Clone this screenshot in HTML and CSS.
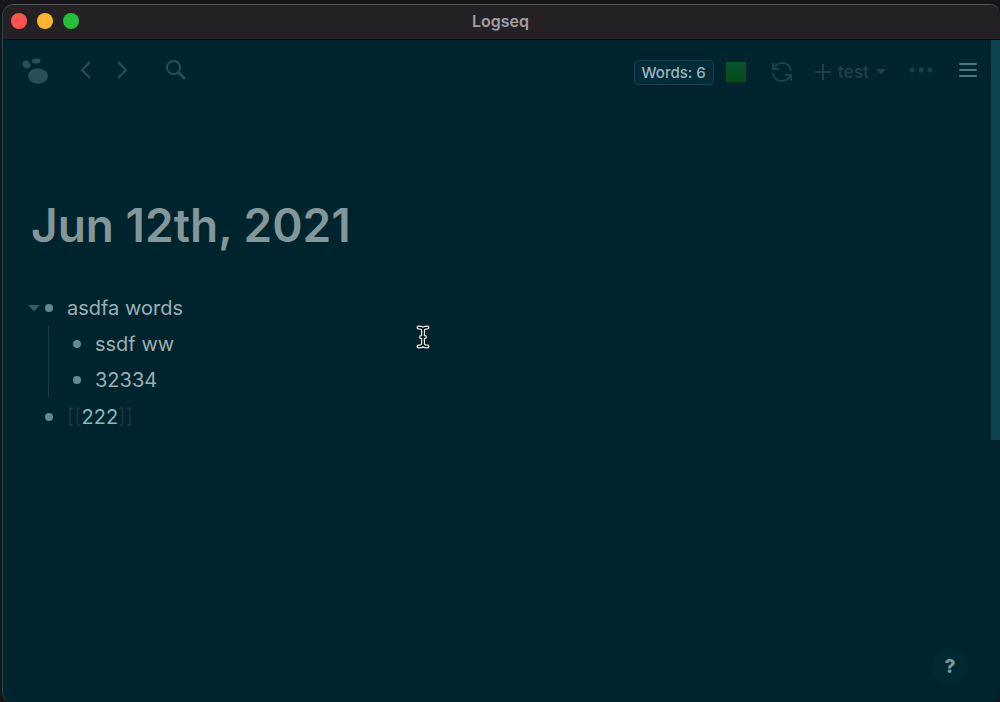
FILE: index.html
```html
<!DOCTYPE html>
<html lang="en">
<head>
<meta charset="utf-8">
<title>Logseq</title>
<meta name="viewport" content="width=device-width, initial-scale=1">
<link rel="stylesheet" href="styles.css">
</head>
<body>
<div class="window">
  <header class="titlebar">
    <div class="lights">
      <button class="light light-close" aria-label="Close"></button>
      <button class="light light-minimize" aria-label="Minimize"></button>
      <button class="light light-zoom" aria-label="Zoom"></button>
    </div>
    <div class="titlebar-text">Logseq</div>
  </header>
  <div class="app">
    <div class="main">
      <nav class="toolbar">
        <a class="logo" href="#" aria-label="Home">
          <svg width="26" height="26" viewBox="0 0 26 26" fill="currentColor"><ellipse cx="4.500" cy="6.500" rx="3.600" ry="4.300" transform="rotate(-35 4.500 6.500)"/><ellipse cx="14.200" cy="3" rx="4.300" ry="2.500" transform="rotate(-5 14.200 3)"/><ellipse cx="16" cy="18" rx="10" ry="7.800" transform="rotate(5 16 18)"/></svg>
        </a>
        <div class="history">
          <button class="icon-button" aria-label="Back"><svg width="12" height="18" viewBox="0 0 12 18" class="stroke"><path d="M10 1 2 9l8 8"/></svg></button>
          <button class="icon-button" aria-label="Forward"><svg width="12" height="18" viewBox="0 0 12 18" class="stroke"><path d="m2 1 8 8-8 8"/></svg></button>
        </div>
        <button class="icon-button search" aria-label="Search"><svg width="22" height="22" viewBox="0 0 22 22" class="stroke"><circle cx="8.500" cy="8.500" r="6.500"/><path d="m13 13 7 7" stroke-width="2.600"/></svg></button>
        <div class="actions">
          <button class="word-count">Words: 6</button>
          <button class="status" aria-label="Sync status"></button>
          <button class="icon-button refresh" aria-label="Refresh"><svg width="20" height="20" viewBox="0 0 20 20" class="stroke"><path d="M1 1v6h6M1.500 6.500C3.500 2.500 7 1 10.500 1c4.500 0 8.500 3.500 8.500 8M19 19v-6h-6M18.500 13.500c-2 4-5.500 5.500-9 5.500C5 19 1 15.500 1 11"/></svg></button>
          <button class="icon-button graph"><svg width="16" height="16" viewBox="0 0 16 16" class="stroke"><path d="M8 0v16M0 8h16"/></svg><span>test</span><svg class="caret" width="10" height="6" viewBox="0 0 10 6"><path d="M0 0h10L5 5.500z" fill="currentColor"/></svg></button>
          <button class="icon-button more" aria-label="More"><svg width="24" height="6" viewBox="0 0 24 6" fill="currentColor"><circle cx="3" cy="3" r="2.500"/><circle cx="12" cy="3" r="2.500"/><circle cx="21" cy="3" r="2.500"/></svg></button>
          <button class="icon-button menu" aria-label="Menu"><svg width="18" height="16" viewBox="0 0 18 16" class="stroke" stroke-linecap="round"><path d="M1 2h16M1 8h16M1 14h16"/></svg></button>
        </div>
      </nav>
      <main class="page">
        <h1>Jun 12th, 2021</h1>
        <ul class="blocks">
          <li>
            <div class="block"><button class="fold" aria-label="Collapse"><svg width="12" height="7" viewBox="0 0 12 7"><path d="M0 0h12L6 6.500z" fill="currentColor"/></svg></button><span class="bullet"></span><span>asdfa words</span></div>
            <ul class="children">
              <li class="block"><span class="bullet"></span><span>ssdf ww</span></li>
              <li class="block"><span class="bullet"></span><span>32334</span></li>
            </ul>
          </li>
          <li class="block block-root"><span class="bullet"></span><span><span class="bracket">[[</span><a class="ref" href="#">222</a><span class="bracket">]]</span></span></li>
        </ul>
      </main>
    </div>
    <div class="scrollbar"><div class="thumb"></div></div>
  </div>
</div>
<button class="help" aria-label="Help">?</button>
<svg class="cursor" width="14" height="24" viewBox="0 0 14 24" fill="none" stroke-linecap="round" stroke-linejoin="round"><path d="M2.500 2.500C5 2.500 7 3 7 5c0-2 2-2.500 4.500-2.500M7 5v14M2.500 21.500C5 21.500 7 21 7 19c0 2 2 2.500 4.500 2.500M5 12h4" stroke="#e8eeee" stroke-width="4"/><path d="M2.500 2.500C5 2.500 7 3 7 5c0-2 2-2.500 4.500-2.500M7 5v14M2.500 21.500C5 21.500 7 21 7 19c0 2 2 2.500 4.500 2.500M5 12h4" stroke="#000" stroke-width="1.500"/></svg>
</body>
</html>
```
FILE: styles.css
```css
* {
  box-sizing: border-box;
}

body {
  margin: 0;
  min-height: 100vh;
  display: flex;
  padding: 4px 0 0 2px;
  background: #161518;
  font-family: Inter, "Liberation Sans", sans-serif;
  color: #9eafb2;
}

button {
  margin: 0;
  padding: 0;
  border: 0;
  background: none;
  color: inherit;
  font: inherit;
}

a {
  color: inherit;
  text-decoration: none;
}

ul {
  margin: 0;
  padding: 0;
  list-style: none;
}

svg {
  display: block;
}

.window {
  flex: 1;
  display: flex;
  flex-direction: column;
  border-top: 1px solid #59585a;
  border-left: 1px solid #294850;
  border-radius: 12px 10px 10px 10px;
  overflow: hidden;
  background: #00242d;
}

.titlebar {
  display: grid;
  grid-template-columns: 1fr auto 1fr;
  align-items: center;
  height: 35px;
  padding: 0 10px 2px 8px;
  background: #232124;
  border-bottom: 1px solid #090d0f;
}

.lights {
  display: flex;
  gap: 10px;
}

.light {
  width: 16px;
  height: 16px;
  border-radius: 50%;
}

.light-close {
  background: #ff544d;
}

.light-minimize {
  background: #ffb52c;
}

.light-zoom {
  background: #24c138;
}

.titlebar-text {
  color: #a09fa1;
  font-size: 16px;
  font-weight: 600;
}

.app {
  flex: 1;
  display: flex;
}

.main {
  flex: 1;
}

.scrollbar {
  width: 9px;
}

.thumb {
  height: 400px;
  background: #0e4251;
}

.toolbar {
  display: flex;
  align-items: center;
  height: 60px;
  padding: 0 14px 0 19px;
  color: #294e57;
}

.history {
  display: flex;
  gap: 24px;
  margin-left: 32px;
}

.logo {
  margin-top: 2px;
}

.icon-button {
  display: flex;
  align-items: center;
}

.search {
  margin-left: 37px;
}

.stroke {
  fill: none;
  stroke: currentColor;
  stroke-width: 2;
}

.actions {
  display: flex;
  align-items: center;
  margin-left: auto;
  padding-top: 4px;
  color: #1c4049;
}

.word-count {
  height: 25px;
  padding: 0 7px;
  border: 1px solid #18414d;
  border-radius: 4px;
  background: #002b39;
  color: #a0b5b9;
  font-size: 15px;
  font-weight: 500;
}

.status {
  width: 20px;
  height: 20px;
  margin-left: 12px;
  background: linear-gradient(#09562b, #024c15);
}

.refresh {
  margin-left: 26px;
}

.graph {
  gap: 7px;
  margin-left: 23px;
  font-size: 17px;
  font-weight: 600;
}

.caret {
  color: #263d48;
}

.more {
  margin: 0 0 4px 23px;
}

.menu {
  margin: 0 0 4px 26px;
  color: #4e777c;
}

.page {
  padding: 95px 24px 24px 28px;
}

h1 {
  margin: 0;
  font-size: 46px;
  line-height: 60px;
  font-weight: 600;
  color: #839699;
}

.blocks {
  margin-top: 35px;
  font-size: 20px;
}

.block {
  display: flex;
  align-items: center;
  height: 36px;
}

.fold {
  width: 17px;
  margin-left: -3px;
  color: #315c65;
}

.bullet {
  width: 8px;
  height: 8px;
  margin-right: 14px;
  border-radius: 50%;
  background: #668a91;
}

.children {
  margin: 0 0 1px 17px;
  padding-left: 24px;
  border-left: 1px solid #0e3c48;
}

.block-root {
  padding-left: 14px;
}

.bracket {
  color: #18343e;
}

.ref {
  color: #8cb8bc;
}

.help {
  position: fixed;
  right: 32px;
  bottom: 18px;
  width: 36px;
  height: 36px;
  border-radius: 50%;
  background: #002832;
  color: #7d979b;
  font-size: 19px;
  font-weight: 800;
}

.cursor {
  position: absolute;
  left: 416px;
  top: 325px;
}
```
